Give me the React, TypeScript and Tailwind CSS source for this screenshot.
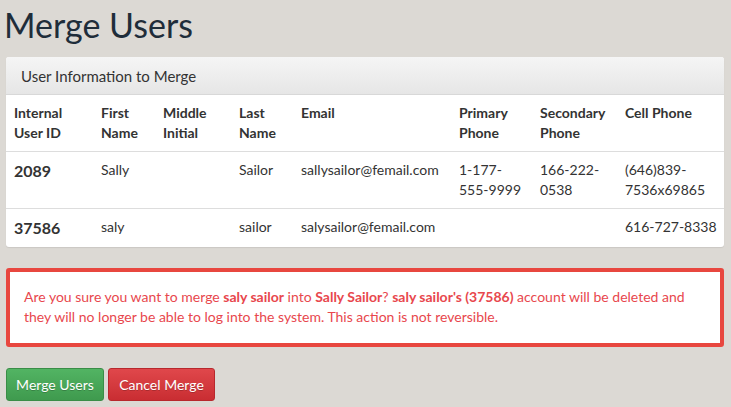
import React from "react";

const users = [
  {
    id: "2089",
    first: "Sally",
    middle: "",
    last: "Sailor",
    email: "sallysailor@femail.com",
    primary: "1-177-555-9999",
    secondary: "166-222-0538",
    cell: "(646)839-7536x69865",
  },
  {
    id: "37586",
    first: "saly",
    middle: "",
    last: "sailor",
    email: "salysailor@femail.com",
    primary: "",
    secondary: "",
    cell: "616-727-8338",
  },
];

const font = { fontFamily: "Lato, 'Open Sans', sans-serif" };

export default function App() {
  return (
    <div
      className="min-h-[407px] w-full bg-[#dcd9d4] px-[6px] pt-[1px] text-[14px] text-[#333]"
      style={font}
    >
      <h1 className="-ml-[2px] mb-[8px] text-[34px] leading-[48px] text-[#1f2d3a]">Merge Users</h1>

      <div className="w-[718px] overflow-hidden rounded-[3px] bg-white shadow-[0_1px_1px_rgba(0,0,0,0.08)]">
        <div className="h-[38px] border-b border-[#d8d8d8] bg-gradient-to-b from-[#f5f5f5] to-[#e6e6e6] px-[15px] pt-[8px] text-[15px] text-[#333]">
          User Information to Merge
        </div>
        <table className="w-full table-fixed border-collapse text-left">
          <colgroup>
            <col className="w-[87px]" />
            <col className="w-[62px]" />
            <col className="w-[76px]" />
            <col className="w-[62px]" />
            <col className="w-[158px]" />
            <col className="w-[81px]" />
            <col className="w-[85px]" />
            <col className="w-[107px]" />
          </colgroup>
          <thead>
            <tr className="align-top font-bold leading-[20px]">
              <th className="px-[8px] py-[8px]">Internal User ID</th>
              <th className="px-[8px] py-[8px]">First Name</th>
              <th className="px-[8px] py-[8px]">Middle Initial</th>
              <th className="px-[8px] py-[8px]">Last Name</th>
              <th className="px-[8px] py-[8px]">Email</th>
              <th className="px-[8px] py-[8px]">Primary Phone</th>
              <th className="px-[8px] py-[8px]">Secondary Phone</th>
              <th className="py-[8px] pl-[8px] pr-[2px]">Cell Phone</th>
            </tr>
          </thead>
          <tbody>
            {users.map((u) => (
              <tr key={u.id} className="border-t border-[#dddddd] align-top leading-[20px]">
                <td className="px-[8px] py-[8px] text-[16px] font-bold leading-[22px]">{u.id}</td>
                <td className="px-[8px] py-[8px]">{u.first}</td>
                <td className="px-[8px] py-[8px]">{u.middle}</td>
                <td className="px-[8px] py-[8px]">{u.last}</td>
                <td className="px-[8px] py-[8px]">{u.email}</td>
                <td className="px-[8px] py-[8px]">{u.primary}</td>
                <td className="px-[8px] py-[8px]">{u.secondary}</td>
                <td className="py-[8px] pl-[8px] pr-[2px]">{u.cell}</td>
              </tr>
            ))}
          </tbody>
        </table>
      </div>

      <div className="mt-[21px] w-[718px] rounded-[3px] border-[4px] border-[#e8473f] bg-white px-[14px] pt-[15px] pb-[16px] leading-[20px] text-[#e8474d]">
        <p>
          Are you sure you want to merge <strong>saly sailor</strong> into{" "}
          <strong>Sally Sailor</strong>? <strong>saly sailor's (37586)</strong> account will be
          deleted and they will no longer be able to log into the system. This action is not
          reversible.
        </p>
      </div>

      <div className="mt-[21px] flex gap-[4px]">
        <button className="h-[33px] w-[98px] rounded-[3px] border border-[#3a8d47] bg-gradient-to-b from-[#52b463] to-[#3f9a4e] text-[14px] text-white [text-shadow:0_1px_0_rgba(0,0,0,0.2)]">
          Merge Users
        </button>
        <button className="h-[33px] w-[107px] rounded-[3px] border border-[#b8282d] bg-gradient-to-b from-[#e0474b] to-[#c92d32] text-[14px] text-white [text-shadow:0_1px_0_rgba(0,0,0,0.2)]">
          Cancel Merge
        </button>
      </div>
    </div>
  );
}
